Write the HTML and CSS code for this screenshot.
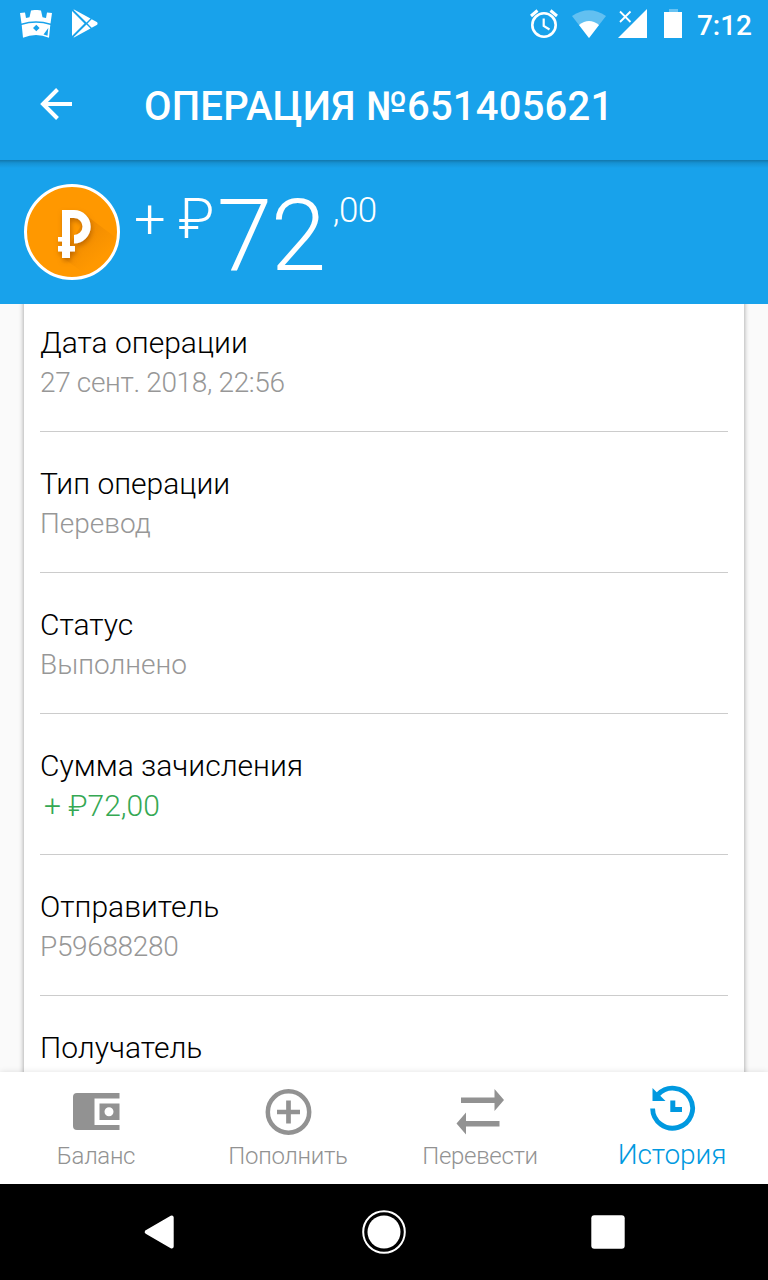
FILE: index.html
```html
<!DOCTYPE html>
<html lang="ru">
<head>
  <meta charset="UTF-8">
  <meta name="viewport" content="width=device-width, initial-scale=1.0">
  <title>Операция №651405621</title>
  <link rel="stylesheet" href="styles.css">
</head>
<body>

  <!-- Status bar -->
  <div class="status-bar">
    <svg class="crown-icon" width="32" height="29" viewBox="0 0 32 29" fill="#fff">
      <path d="M0 3L5 2.500 6 8 9.500 7.300 11 .5Q16-.6 21 .5L22.500 7.300 26 8 27 2.500 32 3 30.500 13.500Q16 9 1.500 13.500Z"/>
      <path fill-rule="evenodd" d="M1.700 15Q16 10.500 30.300 15L29 27.700Q16 22.500 3 27.700ZM13 18L16.300 21.200 19.600 18 16.300 14.800ZM28.300 18L23.500 24.500 27.500 25.800Z"/>
    </svg>
    <svg class="play-icon" width="26" height="29" viewBox="0 0 26 29" fill="#fff">
      <path d="M0 2L12.500 14.500 0 27Z"/>
      <path d="M2 .5L18.500 9.500 14.500 13.500 1.500 .8ZM2 28.500L18.500 19.500 14.500 15.500 1.500 28.200Z"/>
      <path d="M19.700 10.200L25.200 13.300Q26 14.500 25.200 15.700L19.700 18.700 15.500 14.500Z"/>
    </svg>
    <div class="status-right">
      <svg width="28" height="30" viewBox="0 0 28 30" fill="none" stroke="#fff">
        <circle cx="14" cy="16" r="11.700" stroke-width="2.600"/>
        <path d="M1 7L7.500 1.500M27 7L20.500 1.500" stroke-width="3"/>
        <path d="M13.700 9.500V17L19.500 20.500" stroke-width="2.200"/>
      </svg>
      <svg class="wifi-icon" width="36" height="30" viewBox="0 0 36 30" fill="#fff">
        <path d="M1 7Q18-4.500 35 7L18 29Z" opacity=".32"/>
        <path d="M8 16Q18 8 28 16L18 29Z"/>
      </svg>
      <svg class="signal-icon" width="30" height="30" viewBox="0 0 30 30">
        <path d="M0 29L29 0V29Z" fill="#fff"/>
        <path d="M2 2.500L12.500 13M12.500 2.500L2 13" stroke="#fff" stroke-width="1.800"/>
      </svg>
      <svg class="battery-icon" width="18" height="30" viewBox="0 0 18 30" fill="#fff">
        <path d="M5 0H14V3H5Z" opacity=".35"/>
        <path d="M0 3H18V29H0Z"/>
      </svg>
      <span class="clock">7:12</span>
    </div>
  </div>

  <!-- App bar -->
  <header class="app-bar">
    <svg width="32" height="32" viewBox="0 0 32 32" fill="none" stroke="#fff" stroke-width="4">
      <path d="M32 16H4M17.500 1.500L3 16 17.500 30.500"/>
    </svg>
    <h1>ОПЕРАЦИЯ №651405621</h1>
  </header>

  <!-- Amount -->
  <section class="amount">
    <svg class="coin" width="96" height="96" viewBox="0 0 96 96">
      <defs>
        <linearGradient id="long-shadow" x1="40" y1="36" x2="74" y2="76" gradientUnits="userSpaceOnUse">
          <stop offset="0" stop-color="#e07e00"/>
          <stop offset="1" stop-color="#ff9800"/>
        </linearGradient>
        <filter id="soft" x="-50%" y="-50%" width="200%" height="200%">
          <feDropShadow dx="1" dy="3" stdDeviation="2.500" flood-color="#9c4f00" flood-opacity=".6"/>
        </filter>
      </defs>
      <circle cx="48" cy="48" r="46.500" fill="#ff9800" stroke="#fff" stroke-width="3"/>
      <path d="M63 32L91 53Q86 80 61 90L38 73Z" fill="url(#long-shadow)" opacity=".75"/>
      <g fill="#fff" filter="url(#soft)">
        <path d="M38 26H50A16.700 16.700 0 0 1 50 59.400V51A8.500 8.500 0 0 0 50 34H46V62H51V67.500H46V74H38V67.500H34V62H38V57.500H34V53H38Z"/>
      </g>
    </svg>
    <span class="sign">+ ₽</span>
    <span class="whole">72</span>
    <span class="cents">,00</span>
  </section>

  <!-- Details -->
  <main class="content">
    <div class="card">
      <div class="row">
        <div class="label">Дата операции</div>
        <div class="value digits">27 сент. 2018, 22:56</div>
      </div>
      <div class="row">
        <div class="label">Тип операции</div>
        <div class="value">Перевод</div>
      </div>
      <div class="row">
        <div class="label">Статус</div>
        <div class="value">Выполнено</div>
      </div>
      <div class="row">
        <div class="label">Сумма зачисления</div>
        <div class="value income">+ ₽72,00</div>
      </div>
      <div class="row">
        <div class="label">Отправитель</div>
        <div class="value digits">P59688280</div>
      </div>
      <div class="row">
        <div class="label">Получатель</div>
      </div>
    </div>
  </main>

  <!-- Tabs -->
  <nav class="tabs">
    <div class="tab">
      <svg width="48" height="48" viewBox="0 0 48 48" fill="#929292">
        <path d="M5 5H47.500V10.500H22.500V37H47.500V42H5Q1 42 1 38V9Q1 5 5 5Z"/>
        <path fill-rule="evenodd" d="M27.500 15.500H47.500V32H27.500ZM37 19.200A4.500 4.500 0 1 0 37 28.200 4.500 4.500 0 1 0 37 19.200Z"/>
      </svg>
      <span>Баланс</span>
    </div>
    <div class="tab">
      <svg width="48" height="48" viewBox="0 0 48 48" fill="none" stroke="#929292">
        <circle cx="24.500" cy="24" r="20.700" stroke-width="4.500"/>
        <path d="M24.500 12.500V35.500M13 24H36" stroke-width="4.700"/>
      </svg>
      <span>Пополнить</span>
    </div>
    <div class="tab">
      <svg width="48" height="48" viewBox="0 0 48 48" fill="#929292">
        <path d="M5 9.500H38.500V1L48 12 38.500 23V15H5Z"/>
        <path d="M43.500 33H10V24.500L.5 35.500 10 46.500V38.500H43.500Z"/>
      </svg>
      <span>Перевести</span>
    </div>
    <div class="tab active">
      <svg width="48" height="48" viewBox="0 0 48 48" fill="none" stroke="#0099e0">
        <path d="M4.600 24.500A20 20 0 1 0 10 10.500" stroke-width="4.800"/>
        <path d="M4.500 4L17.500 17H4.500Z" fill="#0099e0" stroke="none"/>
        <path d="M24.800 16.500V25.500H34" stroke-width="5"/>
      </svg>
      <span>История</span>
    </div>
  </nav>

  <!-- System navigation -->
  <div class="system-nav">
    <svg width="44" height="44" viewBox="0 0 44 44">
      <path d="M33.700 7.500V36.500L8.700 22Z" fill="#fff" stroke="#fff" stroke-width="4" stroke-linejoin="round"/>
    </svg>
    <svg width="44" height="44" viewBox="0 0 44 44">
      <circle cx="22" cy="22" r="20.800" fill="none" stroke="#fff" stroke-width="2"/>
      <circle cx="22" cy="22" r="16.500" fill="#fff"/>
    </svg>
    <svg width="44" height="44" viewBox="0 0 44 44">
      <rect x="5.300" y="5.300" width="33.400" height="33.400" rx="3" fill="#fff"/>
    </svg>
  </div>

</body>
</html>
```
FILE: styles.css
```css
* {
  margin: 0;
  padding: 0;
  box-sizing: border-box;
}

body {
  width: 768px;
  height: 1280px;
  display: flex;
  flex-direction: column;
  overflow: hidden;
  font-family: Roboto, sans-serif;
  font-weight: 300;
  background: #fafafa;
}

svg {
  display: block;
  flex-shrink: 0;
}

.status-bar {
  height: 48px;
  display: flex;
  align-items: flex-start;
  padding: 9px 16px 0 20px;
  background: #18a2eb;
  color: #fff;
}

.crown-icon {
  margin-top: 1px;
}

.play-icon {
  margin-left: 20px;
}

.status-right {
  display: flex;
  margin-left: auto;
}

.wifi-icon {
  margin-left: 13px;
}

.signal-icon {
  margin-left: 11px;
}

.battery-icon {
  margin-left: 16px;
}

.clock {
  margin-left: 15px;
  font-size: 28px;
  font-weight: 500;
  line-height: 34px;
}

.app-bar {
  height: 112px;
  display: flex;
  align-items: center;
  gap: 72px;
  padding: 0 40px;
  background: #18a2eb;
  color: #fff;
}

.app-bar h1 {
  font-size: 40px;
  font-weight: 500;
  line-height: 48px;
  padding-top: 5px;
  letter-spacing: 0.2px;
  white-space: nowrap;
}

.amount {
  height: 144px;
  display: flex;
  align-items: flex-start;
  padding: 24px;
  background: linear-gradient(rgba(0, 0, 0, 0.27), rgba(0, 0, 0, 0.1) 3px, rgba(0, 0, 0, 0) 8px) #18a2eb;
  color: #fff;
  line-height: 1;
  white-space: nowrap;
}

.sign {
  margin: 7px 0 0 14px;
  font-size: 56px;
  letter-spacing: -0.5px;
}

.whole {
  margin: 2px 0 0 3px;
  font-size: 100px;
  letter-spacing: -1.5px;
}

.cents {
  margin: 9px 0 0 8px;
  font-size: 35px;
  letter-spacing: -0.5px;
}

.content {
  height: 768px;
  padding: 0 24px;
  overflow: hidden;
  background: #fafafa;
}

.card {
  height: 900px;
  margin-top: -13px;
  padding: 0 16px;
  background: #fff;
  box-shadow: 0 0 5px rgba(0, 0, 0, 0.4);
}

.row {
  height: 141px;
  padding-top: 32px;
  border-bottom: 1px solid #cccccc;
}

.label {
  font-size: 30px;
  line-height: 40px;
  color: #000;
}

.value {
  font-size: 28px;
  line-height: 40px;
  color: #979797;
}

.digits {
  letter-spacing: -0.35px;
}

.income {
  padding-left: 4px;
  font-size: 30px;
  color: #35a853;
}

.tabs {
  position: relative;
  height: 112px;
  display: grid;
  grid-template-columns: repeat(4, 1fr);
  background: #fff;
  box-shadow: 0 0 6px rgba(0, 0, 0, 0.12);
}

.tab {
  display: flex;
  flex-direction: column;
  align-items: center;
  padding-top: 16px;
  font-size: 24px;
  line-height: 32px;
  letter-spacing: -0.3px;
  color: #929292;
}

.tab span {
  margin-top: 4px;
}

.active {
  padding-top: 12px;
  font-size: 28px;
  letter-spacing: -0.1px;
  color: #0099e0;
}

.active span {
  margin-top: 7px;
}

.system-nav {
  height: 96px;
  display: flex;
  align-items: center;
  justify-content: center;
  gap: 180px;
  background: #000;
}
```
